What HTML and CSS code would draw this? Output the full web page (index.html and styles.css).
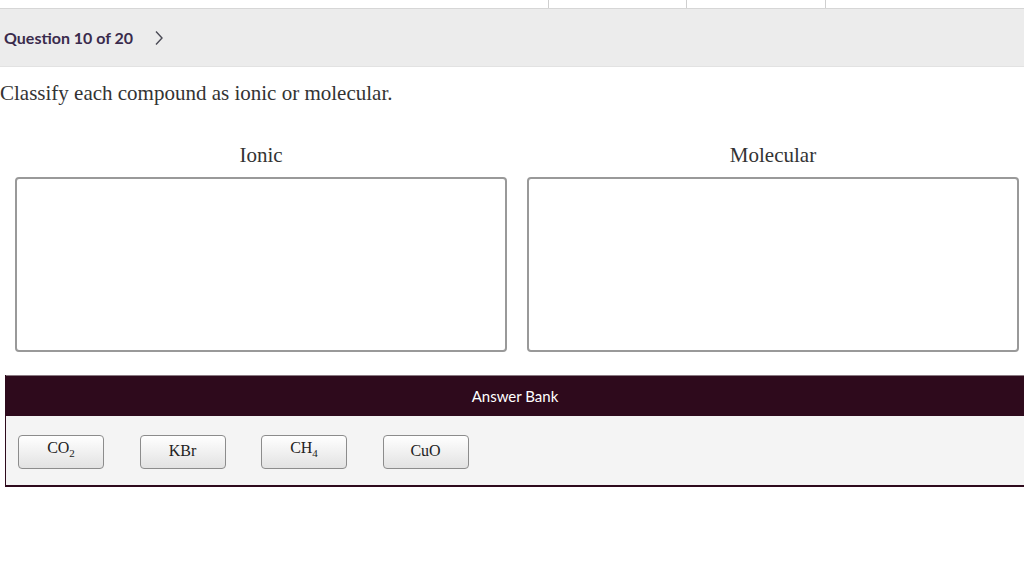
FILE: index.html
```html
<!DOCTYPE html>
<html lang="en">
<head>
    <meta charset="UTF-8">
    <meta name="viewport" content="width=device-width, initial-scale=1.0">
    <title>Question 10 of 20</title>
    <link rel="stylesheet" href="styles.css">
</head>
<body>
<div class="topnav">
    <div class="tab tab-main"></div>
    <div class="tab tab-a"></div>
    <div class="tab tab-b"></div>
    <div class="tab tab-rest"></div>
</div>

<div class="qbar">
    <span class="qlabel">Question 10 of 20</span>
    <svg class="chevron" width="10" height="16" viewBox="0 0 10 16">
        <polyline points="2,1.5 8,8 2,14.5" fill="none" stroke="#4a4a55" stroke-width="1.4"/>
    </svg>
</div>

<p class="prompt">Classify each compound as ionic or molecular.</p>

<div class="bins">
    <div class="bin">
        <div class="bin-title">Ionic</div>
        <div class="bin-box"></div>
    </div>
    <div class="bin">
        <div class="bin-title">Molecular</div>
        <div class="bin-box"></div>
    </div>
</div>

<div class="bank">
    <div class="bank-head">Answer Bank</div>
    <div class="bank-body">
        <button class="chip" type="button">CO<sub>2</sub></button>
        <button class="chip" type="button">KBr</button>
        <button class="chip" type="button">CH<sub>4</sub></button>
        <button class="chip" type="button">CuO</button>
    </div>
</div>
</body>
</html>
```

FILE: styles.css
```css
/* page */
body {
    margin: 0;
    background-color: white;
    font-family: "Liberation Serif", "Times New Roman", serif;
    color: #333;
}

/* thin strip of tabs above the question bar */
.topnav {
    display: flex;
    height: 8px;
    border-bottom: 1px solid #d6d6d6;
}

.tab {
    height: 100%;
}

.tab-main {
    width: 548px;
}

.tab-a {
    width: 137px;
    border-left: 1px solid #cfcfcf;
}

.tab-b {
    width: 138px;
    border-left: 1px solid #cfcfcf;
}

.tab-rest {
    flex: 1;
    border-left: 1px solid #cfcfcf;
}

/* grey bar with the question counter */
.qbar {
    display: flex;
    align-items: center;
    height: 57px;
    background-color: #ececec;
    border-bottom: 1px solid #e2e2e2;
    padding-left: 4px;
}

.qlabel {
    font-family: "Lato", "Liberation Sans", sans-serif;
    font-weight: bold;
    font-size: 16px;
    color: #3a2b4c;
    margin-top: -1px;
}

.chevron {
    margin-left: 21px;
}

.prompt {
    margin: 14px 0 0 0;
    font-size: 21px;
    line-height: 24px;
}

/* the two drop targets */
.bins {
    display: grid;
    grid-template-columns: 492px 492px;
    column-gap: 20px;
    padding: 0 5px 0 15px;
    margin-top: 38px;
}

.bin-title {
    text-align: center;
    font-size: 21px;
    line-height: 24px;
    margin-bottom: 10px;
}

.bin-box {
    height: 171px;
    border: 2px solid #999;
    border-radius: 4px;
    background-color: white;
}

/* answer bank */
.bank {
    margin: 23px 0 0 5px;
    border-left: 1px solid #2e0a1c;
    border-bottom: 2px solid #2e0a1c;
}

.bank-head {
    height: 40px;
    line-height: 40px;
    background-color: #2e0a1c;
    border-top: 1px solid #8a7a82;
    color: white;
    text-align: center;
    font-family: "Lato", "Liberation Sans", sans-serif;
    font-size: 15px;
}

.bank-body {
    display: flex;
    gap: 35.5px;
    padding: 19px 12px 16px 12px;
    background-color: #f4f4f4;
}

.chip {
    width: 86px;
    height: 34px;
    padding: 0 0 3px 0;
    border: 1px solid #8c8c8c;
    border-radius: 4px;
    background: linear-gradient(#ffffff, #e2e2e2);
    font-family: "Liberation Serif", "Times New Roman", serif;
    font-size: 16px;
    color: #222;
    line-height: 18px;
}

.chip sub {
    font-size: 11px;
    vertical-align: -4px;
}
```
